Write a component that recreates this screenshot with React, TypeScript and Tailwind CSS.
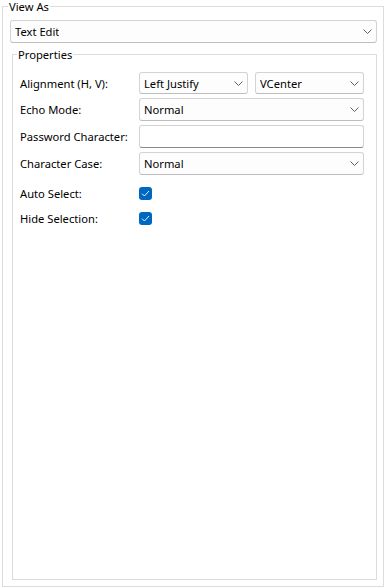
const FONT = { fontFamily: '"Noto Sans", "Open Sans", sans-serif' };

function Chevron() {
  return (
    <svg width="9" height="5" viewBox="0 0 9 5" fill="none" aria-hidden="true">
      <path d="M0.5 0.5 L4.5 4.5 L8.5 0.5" stroke="#616161" strokeWidth="1" />
    </svg>
  );
}

function Combo({ value, className = "" }: { value: string; className?: string }) {
  return (
    <div
      className={`flex items-center justify-between rounded-[3px] border border-[#d3d3d3] border-b-[#bdbdbd] bg-[#fdfdfd] pl-[4px] pr-[4px] ${className}`}
    >
      <span className="truncate">{value}</span>
      <Chevron />
    </div>
  );
}

function Check() {
  return (
    <div className="flex h-[13px] w-[13px] items-center justify-center rounded-[3px] bg-[#0067c0]">
      <svg width="9" height="7" viewBox="0 0 9 7" fill="none" aria-hidden="true">
        <path d="M1 3.6 L3.4 6 L8 1" stroke="#ffffff" strokeWidth="0.9" />
      </svg>
    </div>
  );
}

function Row({ label, children, className = "" }: { label: string; children: React.ReactNode; className?: string }) {
  return (
    <div className={`flex items-center pl-[7px] pr-[12px] ${className}`}>
      <span className="w-[119px] shrink-0">{label}</span>
      <div className="flex flex-1 items-center">{children}</div>
    </div>
  );
}

export default function App() {
  return (
    <div
      className="h-[588px] w-[388px] bg-white pb-[1px] pl-[2px] pr-[4px] pt-[6px] text-[11.2px] leading-[15px] text-black"
      style={FONT}
    >
      <div className="flex h-[581px] flex-col border border-[#dcdcdc]">
        <span className="-mt-[7px] ml-[5px] self-start bg-white px-[1px] leading-[14px]">View As</span>
        <Combo value="Text Edit" className="ml-[7px] mr-[6px] mt-[6px] h-[23px]" />

        <div className="mb-[6px] ml-[9px] mr-[6px] mt-[11px] flex flex-1 flex-col border border-[#dcdcdc]">
          <span className="-mt-[8px] ml-[4px] self-start bg-white px-[1px]">Properties</span>

          <Row label="Alignment (H, V):" className="mt-[10px]">
            <div className="flex w-full gap-[7px]">
              <Combo value="Left Justify" className="h-[22px] flex-1" />
              <Combo value="VCenter" className="h-[22px] flex-1" />
            </div>
          </Row>
          <Row label="Echo Mode:" className="mt-[4px]">
            <Combo value="Normal" className="h-[23px] w-full" />
          </Row>
          <Row label="Password Character:" className="mt-[4px]">
            <div className="h-[23px] w-full rounded-[3px] border border-[#d3d3d3] border-b-[#8a8a8a] bg-white" />
          </Row>
          <Row label="Character Case:" className="mt-[4px]">
            <Combo value="Normal" className="h-[23px] w-full" />
          </Row>
          <Row label="Auto Select:" className="mt-[8px] h-[21px]">
            <Check />
          </Row>
          <Row label="Hide Selection:" className="mt-[4px] h-[21px]">
            <Check />
          </Row>
        </div>
      </div>
    </div>
  );
}
